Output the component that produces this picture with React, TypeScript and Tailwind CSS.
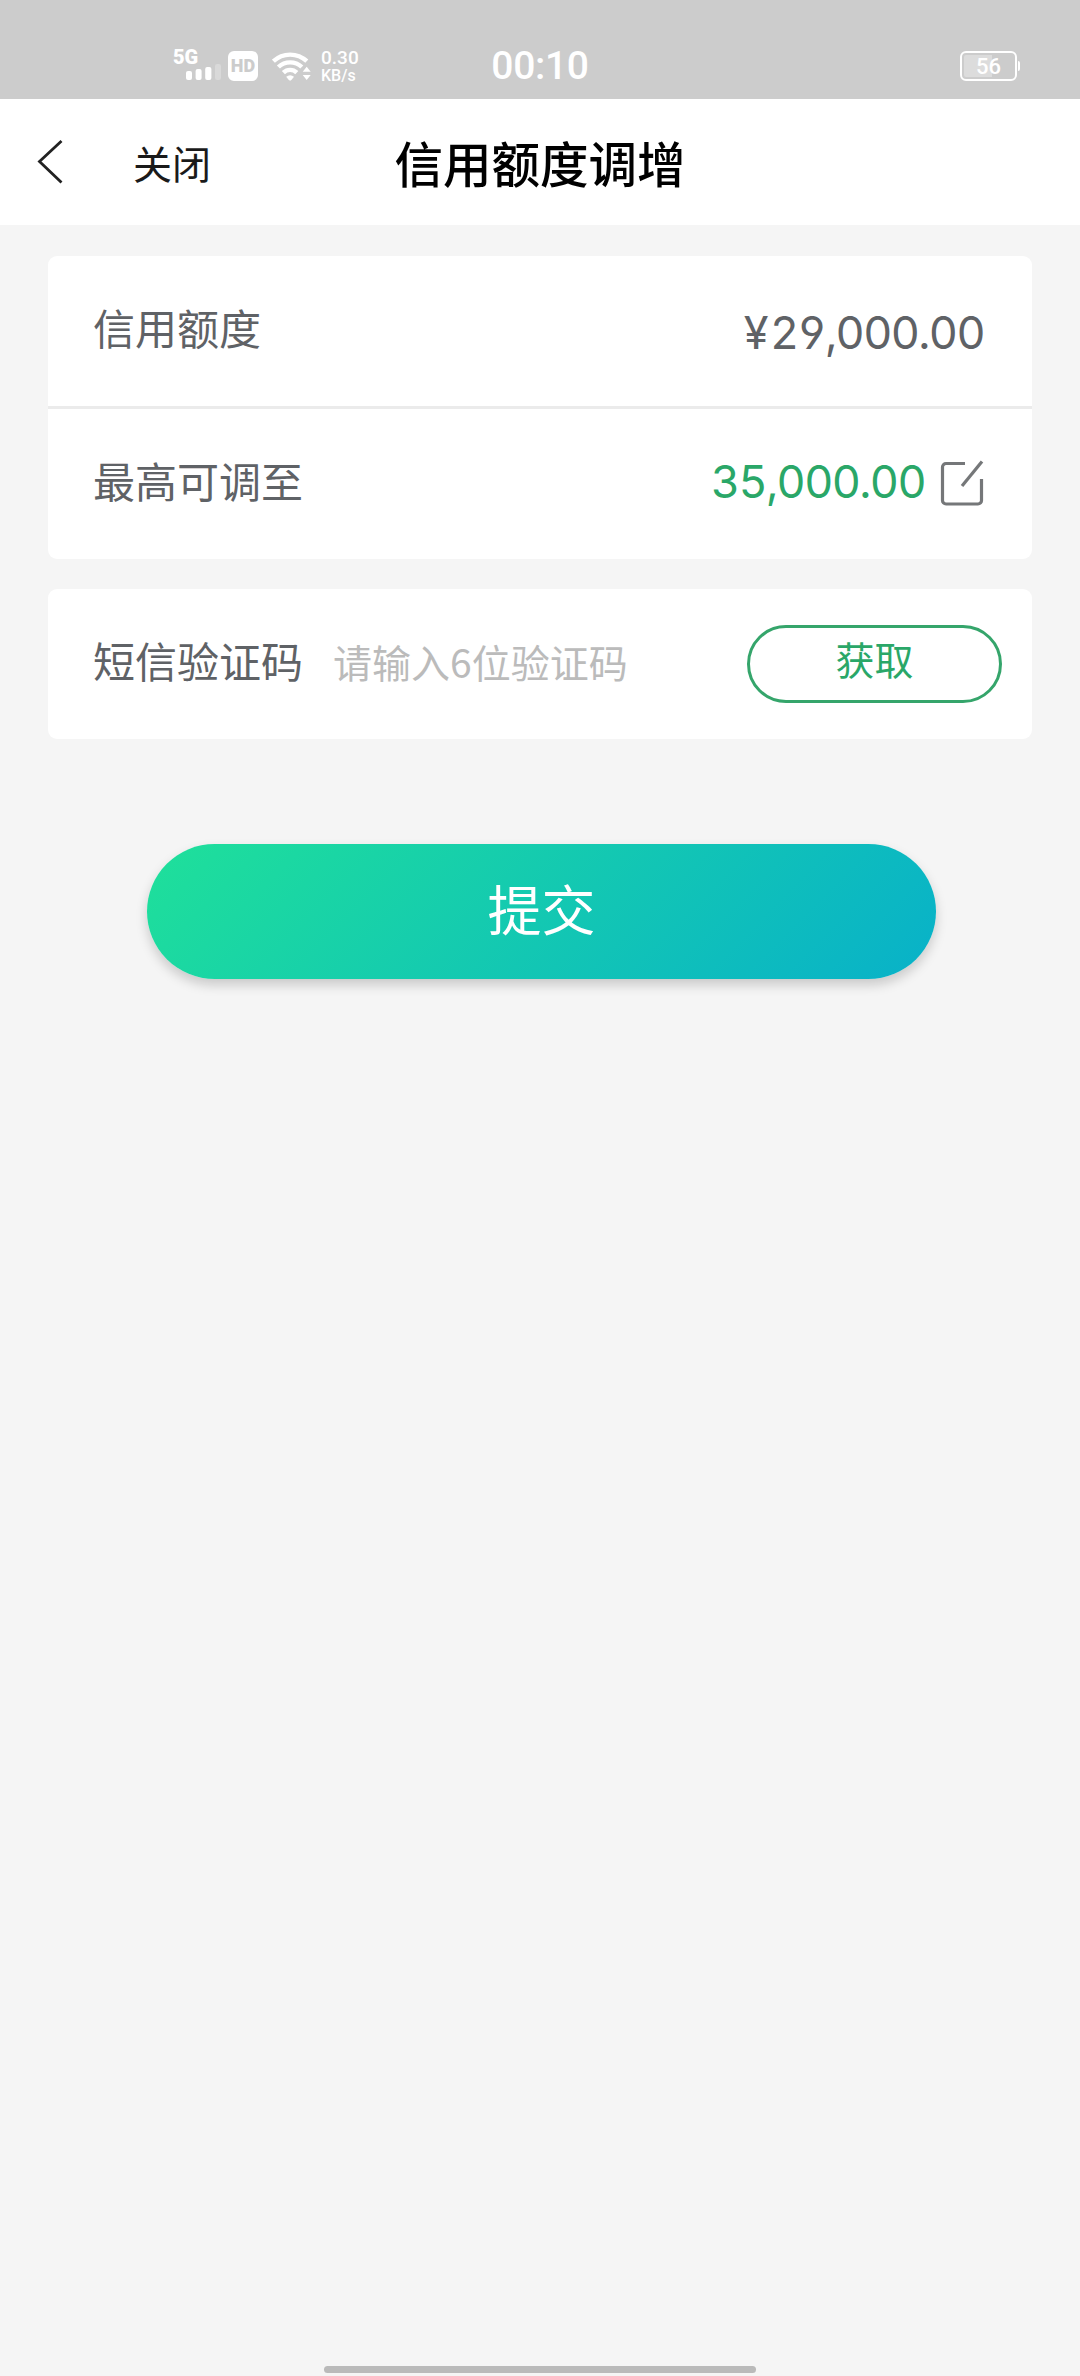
import { ReactNode } from "react";

function SignalBars() {
  return (
    <svg
      className="absolute top-[14px] left-[13px] h-4 w-9"
      viewBox="0 0 36 16"
      fill="#fff"
      aria-hidden
    >
      <rect x="0" y="7" width="6" height="9" rx="2" />
      <rect x="9.6" y="5" width="6" height="11" rx="2" />
      <rect x="19.2" y="3" width="6.2" height="13" rx="2" />
      <rect x="29" y="0" width="6" height="16" rx="2" opacity="0.25" />
    </svg>
  );
}

function WifiIcon() {
  return (
    <svg className="h-[30px] w-10" viewBox="0 0 40 30" fill="none" aria-hidden>
      <g stroke="#fff" strokeWidth="4.4">
        <path d="M1.4 10.2a24.4 24.4 0 0 1 33.4 0" />
        <path d="M6.4 16a17 17 0 0 1 23.4 0" />
        <path d="M11.4 21.6a9.6 9.6 0 0 1 13.4 0" />
      </g>
      <path d="M14.2 25.8a6 6 0 0 1 7.8 0L19.8 28.6a2.2 2.2 0 0 1-3.4 0z" fill="#fff" />
      <path d="M34.7 15.8l4 5h-8zM34.7 29l4-5h-8z" fill="#fff" />
    </svg>
  );
}

function BatteryIcon() {
  return (
    <div className="flex items-center">
      <div className="relative flex h-[30px] w-[57px] items-center justify-center rounded-[6px] border-2 border-white">
        <div className="absolute top-[2px] left-[2px] h-[22px] w-7 rounded-l-[2px] bg-[#dcdcdc]" />
        <span className="relative pt-px font-['Roboto',sans-serif] text-[22px] leading-none font-medium text-white">
          56
        </span>
      </div>
      <div className="ml-px h-[10px] w-[2px] rounded-r-full bg-white" />
    </div>
  );
}

function EditIcon() {
  return (
    <svg
      className="h-[46px] w-[44px]"
      viewBox="0 0 44 46"
      fill="none"
      stroke="#757779"
      strokeWidth="3.2"
      aria-hidden
    >
      <path d="M25 3.5H6A3.5 3.5 0 0 0 2.5 7v33.5A3.5 3.5 0 0 0 6 44h32a3.5 3.5 0 0 0 3.5-3.5V19" />
      <path d="M42 1.5L22 26" />
    </svg>
  );
}

function StatusBar() {
  return (
    <div className="relative flex h-[99px] items-start bg-[#cccccc] pt-[50px] text-white">
      <div className="relative ml-[173px] h-8 w-[55px]">
        <span className="block font-['Roboto',sans-serif] text-[20px] leading-[15px] font-black">
          5G
        </span>
        <SignalBars />
      </div>
      <div className="mt-px flex h-[30px] w-[30px] items-center justify-center rounded-[6px] bg-white font-['Roboto',sans-serif] text-[18px] leading-none font-black text-[#cccccc]">
        HD
      </div>
      <div className="mt-px ml-[14px]">
        <WifiIcon />
      </div>
      <div className="-mt-px ml-[9px] font-['Roboto',sans-serif] font-medium">
        <div className="text-[19px] leading-[18px]">0.30</div>
        <div className="text-[16px] leading-[17px]">KB/s</div>
      </div>
      <div className="absolute inset-x-0 top-[43px] text-center font-['Roboto',sans-serif] text-[39px] leading-[46px] font-medium tracking-[-0.3px]">
        00:10
      </div>
      <div className="mt-px mr-[60px] ml-auto">
        <BatteryIcon />
      </div>
    </div>
  );
}

function NavBar() {
  return (
    <header className="relative flex h-[126px] items-center bg-white">
      <button type="button" className="ml-9 h-[46px] w-7" aria-label="返回">
        <svg
          className="h-[46px] w-7"
          viewBox="0 0 28 46"
          fill="none"
          stroke="#222"
          strokeWidth="2.8"
          aria-hidden
        >
          <path d="M25.5 2L3.5 22.5L25.5 43.5" />
        </svg>
      </button>
      <button type="button" className="ml-[69px] text-[39px] leading-none text-[#1a1a1a]">
        关闭
      </button>
      <h1 className="absolute inset-x-0 text-center text-[48.5px] leading-none font-medium text-black">
        信用额度调增
      </h1>
    </header>
  );
}

function Row({ label, children }: { label: string; children: ReactNode }) {
  return (
    <div className="flex h-[150px] items-center pr-[48px] pl-[45px]">
      <span className="pb-2 text-[42px] leading-none text-[#5f6266]">{label}</span>
      {children}
    </div>
  );
}

export default function App() {
  return (
    <div className="flex h-[2376px] w-[1080px] flex-col bg-[#f5f5f5] font-['Noto_Sans_CJK_SC',sans-serif]">
      <StatusBar />
      <NavBar />

      <main className="flex flex-1 flex-col px-12 pt-[31px]">
        <section className="rounded-[9px] bg-white">
          <Row label="信用额度">
            <span className="mt-[2px] ml-auto font-['Inter',sans-serif] text-[45px] leading-none tracking-[-1.6px] text-[#5f6266] [font-feature-settings:'tnum','cv03','cv04']">
              <span className="mr-[3px]">¥</span>29,000.00
            </span>
          </Row>
          <div className="h-[3px] bg-[#ebebeb]" />
          <Row label="最高可调至">
            <span className="ml-auto pb-[5px] font-['Inter',sans-serif] text-[45px] leading-none tracking-[-1.6px] text-[#2aa768] [font-feature-settings:'tnum','cv03','cv04']">
              35,000.00
            </span>
            <button type="button" className="mb-[2px] ml-[15px]" aria-label="编辑">
              <EditIcon />
            </button>
          </Row>
        </section>

        <section className="mt-[30px] flex h-[150px] items-center rounded-[9px] bg-white pr-[30px] pl-[45px]">
          <label htmlFor="sms" className="shrink-0 pb-2 text-[42px] leading-none text-[#5f6266]">
            短信验证码
          </label>
          <input
            id="sms"
            placeholder="请输入6位验证码"
            className="ml-[30px] w-0 flex-1 pb-[6px] text-[39px] outline-none placeholder:text-[#bbbbbb]"
          />
          <button
            type="button"
            className="h-[78px] w-[255px] rounded-full border-[3px] border-[#35a56b] pb-3 text-[39px] leading-none text-[#2aa768]"
          >
            获取
          </button>
        </section>

        <button
          type="button"
          className="mt-[105px] ml-[99px] h-[135px] w-[789px] rounded-full bg-[linear-gradient(135deg,#1fe09a_0%,#08b1c9_100%)] pb-[7px] text-[54px] leading-none text-white shadow-[0_6px_12px_rgba(0,0,0,0.18)]"
        >
          提交
        </button>

        <div className="mt-auto mb-[3px] h-[7px] w-[432px] self-center rounded-full bg-[#bababa]" />
      </main>
    </div>
  );
}
